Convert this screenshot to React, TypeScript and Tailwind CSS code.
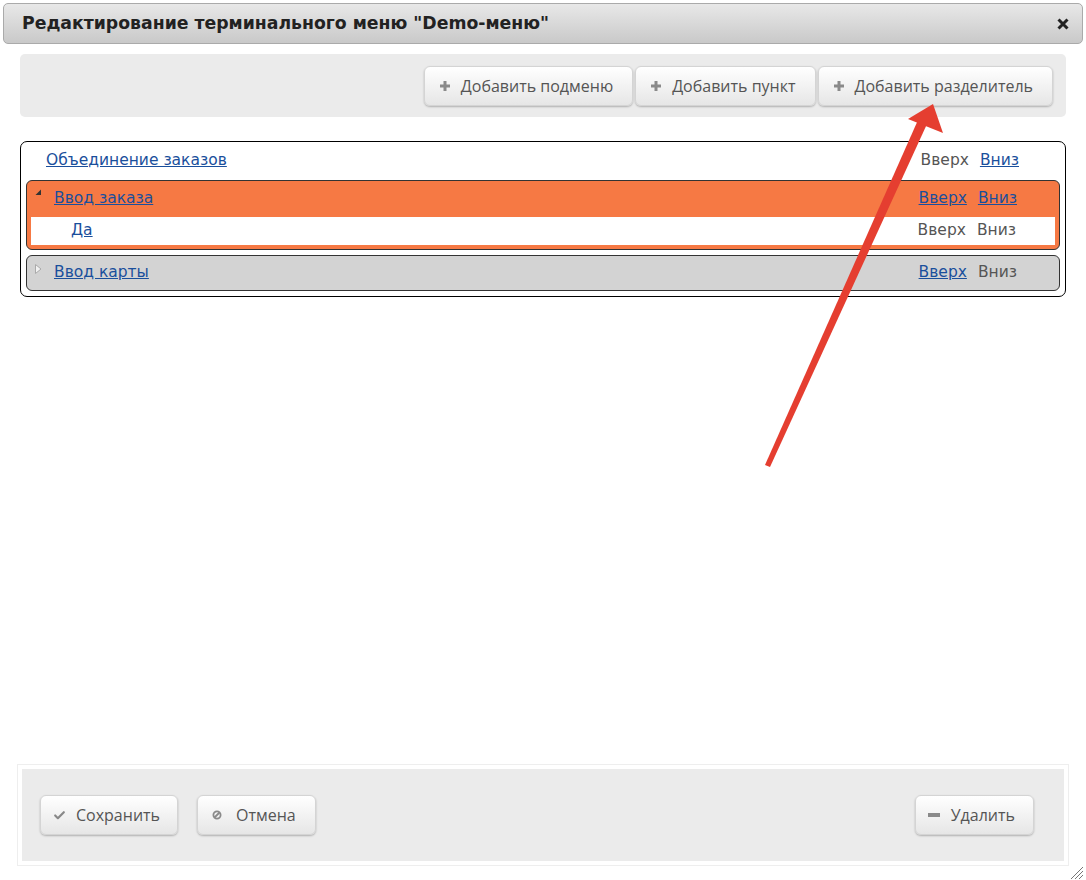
import { Check } from 'lucide-react';

const btn =
  'flex items-center h-[40px] rounded-[6px] border border-[#d4d4d4] bg-gradient-to-b from-white to-[#e6e6e6] shadow-[0_1px_2px_rgba(0,0,0,0.25)] text-[16px] text-[#555] font-["Open_Sans",sans-serif]';
const topBtn = `${btn} gap-[11px] pl-[15px] pr-[19px]`;
const footBtn = `${btn} gap-[10px] pl-[12px] pr-[17px]`;

function PlusIcon() {
  return (
    <svg width="10" height="10" viewBox="0 0 10 10" className="shrink-0">
      <rect x="3.5" y="0" width="3" height="10" fill="#8a8a8a" />
      <rect x="0" y="3.5" width="10" height="3" fill="#8a8a8a" />
    </svg>
  );
}

function Row({
  label,
  up,
  down,
  h,
  indent,
  pr,
}: {
  label: string;
  up: boolean;
  down: boolean;
  h: string;
  indent: string;
  pr: string;
}) {
  return (
    <div className={`flex items-center justify-between ${h} ${indent} ${pr}`}>
      <a className="text-[#1a4f9c] underline">{label}</a>
      <div className="flex gap-[11px]">
        <span className={up ? 'text-[#1a4f9c] underline' : 'text-[#555]'}>Вверх</span>
        <span className={down ? 'text-[#1a4f9c] underline' : 'text-[#555]'}>Вниз</span>
      </div>
    </div>
  );
}

export default function App() {
  return (
    <div className="relative w-[1086px] h-[880px] bg-white font-['DejaVu_Sans',sans-serif] text-[15.5px] overflow-hidden">
      <div className="pt-[3px] px-[3px]">
        <div className="flex items-center justify-between h-[41px] pl-[18px] pr-[13px] rounded-[5px] border border-[#aaa] bg-gradient-to-b from-[#e8e8e8] to-[#c9c9c9]">
          <span className="font-bold text-[17.3px] text-[#222]">Редактирование терминального меню "Demo-меню"</span>
          <svg width="12" height="12" viewBox="0 0 12 12">
            <path d="M1.5 1.5 L10.5 10.5 M10.5 1.5 L1.5 10.5" stroke="#222" strokeWidth="3" />
          </svg>
        </div>
      </div>

      <div className="mx-[20px] mt-[10px] h-[63px] rounded-[5px] bg-[#ebebeb] flex items-center justify-end gap-[2px] pr-[13px]">
        <button className={topBtn}>
          <PlusIcon />
          Добавить подменю
        </button>
        <button className={topBtn}>
          <PlusIcon />
          Добавить пункт
        </button>
        <button className={topBtn}>
          <PlusIcon />
          Добавить разделитель
        </button>
      </div>

      <div className="mx-[20px] mt-[24px] border border-black rounded-[7px] pb-[5px]">
        <Row label="Объединение заказов" up={false} down={true} h="h-[38px]" indent="pl-[25px]" pr="pr-[46px]" />
        <div className="mx-[5px] border border-[#333] rounded-[6px] bg-[#f67944] pb-[4px]">
          <div className="relative">
            <svg className="absolute left-[8px] top-[8px]" width="7" height="7" viewBox="0 0 7 7">
              <polygon points="6,0.5 6,6 0.5,6" fill="#333" />
            </svg>
            <Row label="Ввод заказа" up={true} down={true} h="h-[36px]" indent="pl-[27px]" pr="pr-[42px]" />
          </div>
          <div className="mx-[4px] bg-white">
            <Row label="Да" up={false} down={false} h="h-[28px]" indent="pl-[40px]" pr="pr-[39px]" />
          </div>
        </div>
        <div className="relative mx-[5px] mt-[5px] border border-[#333] rounded-[6px] bg-[#d3d3d3]">
          <svg className="absolute left-[8px] top-[8px]" width="7" height="10" viewBox="0 0 7 10">
            <polygon points="0.5,0.5 6,5 0.5,9.5" fill="#f2f2f2" stroke="#aaa" strokeWidth="1" />
          </svg>
          <Row label="Ввод карты" up={true} down={false} h="h-[34px]" indent="pl-[27px]" pr="pr-[42px]" />
        </div>
      </div>

      <div className="absolute left-[18px] top-[765px] w-[1050px] h-[100px] border-[4px] border-white shadow-[0_0_0_1px_#eee] bg-[#ebebeb] flex items-center justify-between pl-[18px] pr-[30px]">
        <div className="flex gap-[19px]">
          <button className={footBtn}>
            <Check size={13} strokeWidth={4} className="text-[#888] shrink-0" />
            Сохранить
          </button>
          <button className={`${btn} gap-[14px] pl-[14px] pr-[19px]`}>
            <svg width="10" height="10" viewBox="0 0 10 10" className="shrink-0">
              <circle cx="5" cy="5" r="3.6" fill="none" stroke="#8a8a8a" strokeWidth="1.8" />
              <path d="M2.5 7.5 L7.5 2.5" stroke="#8a8a8a" strokeWidth="1.8" />
            </svg>
            Отмена
          </button>
        </div>
        <button className={`${btn} gap-[11px] pl-[12px] pr-[18px]`}>
          <svg width="12" height="4" viewBox="0 0 12 4" className="shrink-0">
            <rect x="0" y="0" width="12" height="4" fill="#8a8a8a" />
          </svg>
          Удалить
        </button>
      </div>

      <svg className="absolute left-[1068px] top-[864px]" width="16" height="16" viewBox="0 0 16 16">
        <path d="M15 3 L3 15 M15 7 L7 15 M15 11 L11 15" stroke="#777" strokeWidth="1" />
      </svg>

      <svg className="absolute left-0 top-0 pointer-events-none" width="1086" height="880">
        <polygon points="765,465 770,467 927,124 918,120" fill="#e53e30" />
        <polygon points="933,104 908,119 943,133" fill="#e53e30" />
      </svg>
    </div>
  );
}
